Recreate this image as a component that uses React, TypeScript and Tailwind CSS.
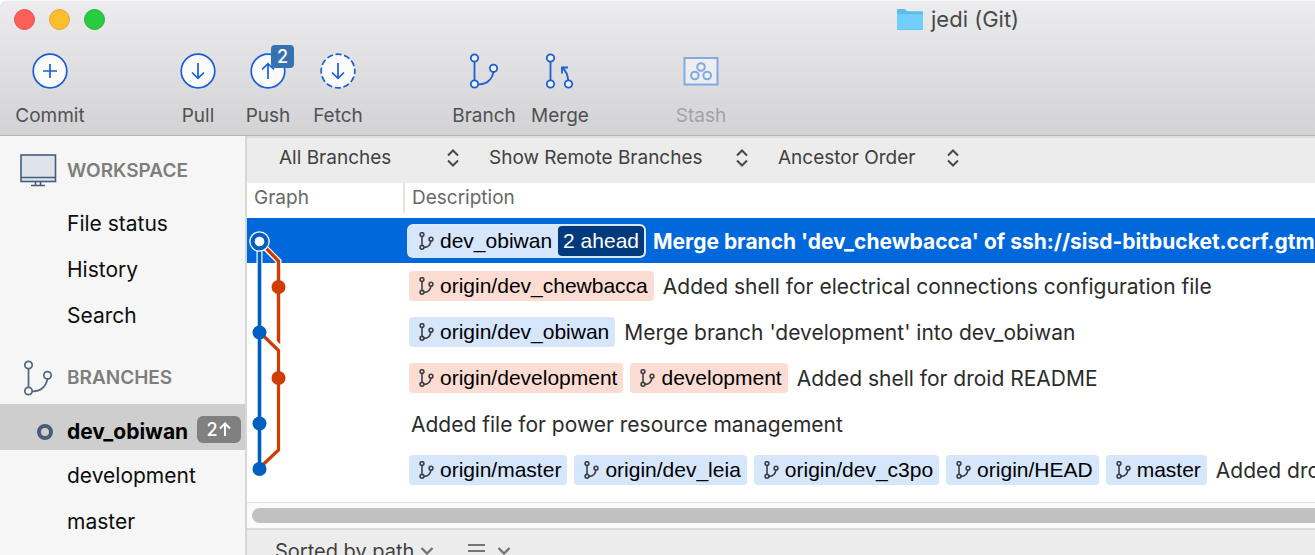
import type { ReactNode } from "react";

type Tone = "blue" | "red";
type Tag = { name: string; tone: Tone; ahead?: string };
type Commit = { tags: Tag[]; text: string; selected?: boolean };

const commits: Commit[] = [
  {
    tags: [{ name: "dev_obiwan", tone: "blue", ahead: "2 ahead" }],
    text: "Merge branch 'dev_chewbacca' of ssh://sisd-bitbucket.ccrf.gtm",
    selected: true,
  },
  {
    tags: [{ name: "origin/dev_chewbacca", tone: "red" }],
    text: "Added shell for electrical connections configuration file",
  },
  {
    tags: [{ name: "origin/dev_obiwan", tone: "blue" }],
    text: "Merge branch 'development' into dev_obiwan",
  },
  {
    tags: [
      { name: "origin/development", tone: "red" },
      { name: "development", tone: "red" },
    ],
    text: "Added shell for droid README",
  },
  { tags: [], text: "Added file for power resource management" },
  {
    tags: [
      { name: "origin/master", tone: "blue" },
      { name: "origin/dev_leia", tone: "blue" },
      { name: "origin/dev_c3po", tone: "blue" },
      { name: "origin/HEAD", tone: "blue" },
      { name: "master", tone: "blue" },
    ],
    text: "Added droid",
  },
];

function BranchGlyph({ className }: { className: string }) {
  return (
    <svg viewBox="0 0 30 36" fill="none" stroke="currentColor" strokeWidth="1.8" className={className} aria-hidden="true">
      <path d="M5.5 8.5V27.5M9.5 31.3C18 31.8 23.5 25.5 24.3 19" />
      <circle cx="5.5" cy="5" r="3.7" fill="#fff" fillOpacity="0.6" />
      <circle cx="5.5" cy="31" r="3.7" fill="#fff" fillOpacity="0.6" />
      <circle cx="24.5" cy="15.3" r="3.7" fill="#fff" fillOpacity="0.6" />
    </svg>
  );
}

function TagGlyph() {
  return (
    <svg viewBox="0 0 15 18" fill="none" stroke="#3c4046" strokeWidth="1.6" className="h-[18px] w-[15px] shrink-0" aria-hidden="true">
      <path d="M3 4.4V13.4M5 15.4C9 15.4 11.4 13 11.9 9.2" />
      <circle cx="3" cy="2.6" r="1.9" />
      <circle cx="3" cy="15.3" r="1.9" />
      <circle cx="12" cy="7.2" r="1.9" />
    </svg>
  );
}

function CircleGlyph({ path, dashed }: { path: string; dashed?: boolean }) {
  return (
    <svg viewBox="0 0 36 36" fill="none" stroke="#1a5fd6" strokeWidth="1.7" className="size-9" aria-hidden="true">
      <circle cx="18" cy="18" r="16.8" fill="#fbfbfc" strokeDasharray={dashed ? "6.2 2.6" : undefined} strokeDashoffset={dashed ? 3.1 : undefined} />
      <path d={path} />
    </svg>
  );
}

const downArrow = "M18 10V25M12 19.5L18 25.3L24 19.5";
const upArrow = "M18 26V11M12 16.5L18 10.7L24 16.5";

function ToolButton({ label, disabled, children }: { label: string; disabled?: boolean; children: ReactNode }) {
  return (
    <button
      type="button"
      disabled={disabled}
      className="flex w-[70px] flex-col items-center gap-[15px] text-[19px] leading-6 text-[#515151] disabled:text-[#a3a3a5]"
    >
      <span className="relative flex h-9 items-center justify-center">{children}</span>
      {label}
    </button>
  );
}

function FilterSelect({ label, value, className }: { label: string; value: string; className: string }) {
  return (
    <div className={`relative flex items-center ${className}`}>
      <select aria-label={label} className="w-full appearance-none bg-transparent text-[19px] leading-6 text-[#404040] outline-none">
        <option>{value}</option>
      </select>
      <svg viewBox="0 0 14 18" fill="none" stroke="#484848" strokeWidth="2" className="pointer-events-none absolute right-0 h-[18px] w-[14px]" aria-hidden="true">
        <path d="M2 6.5L7 1.5L12 6.5M2 11.5L7 16.5L12 11.5" />
      </svg>
    </div>
  );
}

function RefTag({ tag }: { tag: Tag }) {
  const tone = tag.tone === "blue" ? "bg-[#d5e6fd]" : "bg-[#fddcd3]";
  const ring = tag.ahead ? "ring-2 ring-[#d9e8fc]" : "";
  return (
    <span className={`flex h-[30px] shrink-0 items-center overflow-hidden rounded-[4px] font-['Liberation_Sans',Arial,sans-serif] text-[21px] font-normal text-black ${tone} ${ring}`}>
      <span className="flex items-center gap-[6px] pr-[6px] pl-[10px]">
        <TagGlyph />
        {tag.name}
      </span>
      {tag.ahead && (
        <span className="flex h-full items-center rounded-[4px] bg-[#003a7c] px-[5px] text-white">{tag.ahead}</span>
      )}
    </span>
  );
}

function CommitGraph() {
  return (
    <svg viewBox="0 0 60 275" fill="none" className="pointer-events-none absolute top-[35px] left-0 h-[275px] w-[60px]" aria-hidden="true">
      <path d="M12.5 24L31.5 43V130" stroke="#fff" strokeWidth="6" />
      <path d="M12.5 24V251" stroke="#fff" strokeWidth="6" />
      <path d="M13 24L31.5 43V131" stroke="#d13c00" strokeWidth="3.4" />
      <path d="M24 121L36 132" stroke="#fff" strokeWidth="5" />
      <path d="M12.5 114L31.5 132.5V232L12.5 250" stroke="#d13c00" strokeWidth="3.2" />
      <path d="M12.5 24V251" stroke="#0060c2" strokeWidth="3.6" />
      <circle cx="12.5" cy="23.5" r="10.3" fill="#fff" />
      <circle cx="12.5" cy="23.5" r="9" fill="#0060c2" />
      <circle cx="12.5" cy="23.5" r="4.8" fill="#fff" />
      <circle cx="31.5" cy="69" r="7" fill="#d13c00" />
      <circle cx="12.5" cy="114.5" r="7" fill="#0060c2" />
      <circle cx="31.5" cy="160" r="7" fill="#d13c00" />
      <circle cx="12.5" cy="205.5" r="7" fill="#0060c2" />
      <circle cx="12.5" cy="251" r="7" fill="#0060c2" />
    </svg>
  );
}

function Chevron() {
  return (
    <svg viewBox="0 0 14 10" fill="none" stroke="#747474" strokeWidth="2.4" className="h-[10px] w-[14px]" aria-hidden="true">
      <path d="M1.5 2L7 7.5L12.5 2" />
    </svg>
  );
}

function SideItem({ children }: { children: ReactNode }) {
  return (
    <li>
      <a href="#" className="flex h-[46px] items-center pl-[67px] text-[21px] text-[#0d0d0d]">
        {children}
      </a>
    </li>
  );
}

export default function App() {
  return (
    <div className="flex h-screen flex-col overflow-hidden bg-white font-[Inter,sans-serif]">
      <header className="flex shrink-0 flex-col rounded-tl-[6px] border-t border-b border-t-[#f7f7f7] border-b-[#b4b4b6] bg-linear-to-b from-[#ececee] to-[#d3d3d5] pb-[7px]">
        <div className="flex h-9 items-center pl-[14px]">
          <div className="flex gap-[14px]">
            <button type="button" aria-label="Close" className="size-[21px] rounded-full border border-[#e2504a] bg-[#fe5f58]" />
            <button type="button" aria-label="Minimize" className="size-[21px] rounded-full border border-[#e5a52c] bg-[#febe2f]" />
            <button type="button" aria-label="Zoom" className="size-[21px] rounded-full border border-[#22b434] bg-[#29cb41]" />
          </div>
          <h1 className="ml-[791px] flex items-center gap-[7px] text-[22px] leading-7 text-[#484848]">
            <svg viewBox="0 0 28 23" className="h-[23px] w-7" aria-hidden="true">
              <path d="M1 4V2.2Q1 1 2.2 1H8.5L11.5 3.3H26Q27 3.3 27 4.5V20.5Q27 22 25.7 22H2.3Q1 22 1 20.5Z" fill="#5cbdea" />
              <path d="M1 6.2H27V20.3Q27 21.5 25.7 21.5H2.3Q1 21.5 1 20.3Z" fill="#70d0fb" />
            </svg>
            jedi (Git)
          </h1>
        </div>
        <nav aria-label="Toolbar" className="flex pt-4 pl-[15px]">
          <ToolButton label="Commit">
            <CircleGlyph path="M18 11V25M11 18H25" />
          </ToolButton>
          <div className="ml-[78px] flex">
            <ToolButton label="Pull">
              <CircleGlyph path={downArrow} />
            </ToolButton>
            <ToolButton label="Push">
              <CircleGlyph path={upArrow} />
              <span className="absolute -top-2 -right-2 flex size-[23px] items-center justify-center rounded-[4px] bg-[#3672b1] text-[18px] leading-none font-medium text-white">
                2
              </span>
            </ToolButton>
            <ToolButton label="Fetch">
              <CircleGlyph path={downArrow} dashed />
            </ToolButton>
          </div>
          <div className="ml-[76px] flex gap-[6px]">
            <ToolButton label="Branch">
              <BranchGlyph className="h-9 w-[30px] text-[#1a5fd6]" />
            </ToolButton>
            <ToolButton label="Merge">
              <svg viewBox="0 0 30 36" fill="none" stroke="#1a5fd6" strokeWidth="1.8" className="h-9 w-[30px]" aria-hidden="true">
                <path d="M5.5 8.5V27.5M17 20.5V14.5H23M17.3 14.8C21 18 22.8 22 23.2 27.5" />
                <circle cx="5.5" cy="5" r="3.7" fill="#fff" fillOpacity="0.7" />
                <circle cx="5.5" cy="31" r="3.7" fill="#fff" fillOpacity="0.7" />
                <circle cx="23.5" cy="31" r="3.7" fill="#fff" fillOpacity="0.7" />
              </svg>
            </ToolButton>
          </div>
          <div className="ml-[71px] flex">
            <ToolButton label="Stash" disabled>
              <svg viewBox="0 0 36 36" fill="none" stroke="#80aae6" strokeWidth="2" className="size-9" aria-hidden="true">
                <rect x="1.5" y="5" width="33" height="26.5" fill="#eeeef0" />
                <circle cx="18" cy="14" r="3.8" />
                <circle cx="11.8" cy="22.5" r="3.8" />
                <circle cx="24.2" cy="22.5" r="3.8" />
              </svg>
            </ToolButton>
          </div>
        </nav>
      </header>

      <div className="flex min-h-0 flex-1">
        <aside className="w-[247px] shrink-0 border-r-2 border-[#d6d6d6] bg-[#f6f6f6] pt-3">
          <h2 className="flex h-[46px] items-center pl-5 text-[19px] font-semibold text-[#7d7f7c]">
            <svg viewBox="0 0 37 34" fill="none" stroke="#465c80" strokeWidth="1.6" className="mr-[10px] h-[34px] w-[37px]" aria-hidden="true">
              <rect x="1" y="1" width="34.5" height="26.5" fill="#dfe3ea" />
              <path d="M1 23.5H35.5M15.5 27.5V31M20.5 27.5V31M11 31.5H25" />
            </svg>
            WORKSPACE
          </h2>
          <ul className="pt-[7px]">
            <SideItem>File status</SideItem>
            <SideItem>History</SideItem>
            <SideItem>Search</SideItem>
          </ul>
          <h2 className="mt-4 flex h-[46px] items-center pl-[23px] text-[19px] font-semibold text-[#7d7f7c]">
            <BranchGlyph className="mr-[14px] h-9 w-[30px] text-[#566887]" />
            BRANCHES
          </h2>
          <ul className="pt-[3px]">
            <li className="pb-[3px]">
              <a href="#" aria-current="true" className="flex h-[46px] items-center bg-[#cecece] pr-1 pl-[37px] text-[21px] font-bold text-black">
                <span className="flex items-center gap-[14px] pt-[10px]">
                  <span className="size-4 shrink-0 rounded-full border-4 border-[#495b7a]" />
                  dev_obiwan
                </span>
                <span className="mt-1 ml-auto flex h-[27px] w-11 items-center justify-center rounded-[6px] bg-[#808080] text-[18px] font-medium text-white">
                  2
                  <svg viewBox="0 0 14 16" fill="none" stroke="currentColor" strokeWidth="2" className="h-4 w-[14px]" aria-hidden="true">
                    <path d="M7 15V2.5M2 7.5L7 2.5L12 7.5" />
                  </svg>
                </span>
              </a>
            </li>
            <SideItem>development</SideItem>
            <SideItem>master</SideItem>
          </ul>
        </aside>

        <main className="flex min-w-0 flex-1 flex-col overflow-hidden">
          <div className="flex h-[47px] shrink-0 items-center gap-[29px] border-t-2 border-[#dedede] bg-[#ececec] pb-[6px] pl-8">
            <FilterSelect label="Branches" value="All Branches" className="w-[181px]" />
            <FilterSelect label="Remote branches" value="Show Remote Branches" className="w-[260px]" />
            <FilterSelect label="Sort order" value="Ancestor Order" className="w-[182px]" />
          </div>

          <div className="relative shrink-0 overflow-hidden pb-[9px]">
            <table className="w-full table-fixed border-collapse text-left">
              <thead>
                <tr className="h-[35px] text-[19px] leading-6 text-[#686868]">
                  <th scope="col" className="w-[158px] p-0 align-top font-normal">
                    <span className="flex h-[30px] items-center border-r-2 border-[#e4e4e4] pl-[7px]">Graph</span>
                  </th>
                  <th scope="col" className="p-0 align-top font-normal">
                    <span className="flex h-[30px] items-center pl-[7px]">Description</span>
                  </th>
                </tr>
              </thead>
              <tbody>
                {commits.map((commit) => (
                  <tr key={commit.text} className={commit.selected ? "h-[45px] bg-[#0068da] font-bold text-white" : "h-[46px] text-[#2b2b2b]"}>
                    <td className="p-0" />
                    <td className="overflow-hidden p-0">
                      <div className="flex items-center gap-[7px] pl-1 text-[21px] leading-[30px] whitespace-nowrap">
                        {commit.tags.map((tag) => (
                          <RefTag key={tag.name} tag={tag} />
                        ))}
                        <span className="pt-[2px] pl-[2px]">{commit.text}</span>
                      </div>
                    </td>
                  </tr>
                ))}
              </tbody>
            </table>
            <CommitGraph />
          </div>

          <div className="shrink-0 border-t border-b-2 border-t-[#e2e2e2] border-b-[#dadada] bg-[#fafafa] py-[5px] pl-[5px]">
            <div className="h-[15px] rounded-l-full bg-[#c1c1c1]" />
          </div>

          <div className="flex flex-1 items-start gap-[34px] overflow-hidden bg-[#ececec] pt-[9px] pl-7 text-[#404040]">
            <button type="button" className="flex h-6 items-center gap-[6px] text-[20px] leading-6 whitespace-nowrap">
              Sorted by path
              <Chevron />
            </button>
            <button type="button" aria-label="View options" className="flex h-6 items-center gap-3">
              <svg viewBox="0 0 17 16" stroke="#747474" strokeWidth="2" className="h-4 w-[17px]" aria-hidden="true">
                <path d="M0 2H17M0 8H17M0 14H17" />
              </svg>
              <Chevron />
            </button>
          </div>
        </main>
      </div>
    </div>
  );
}
